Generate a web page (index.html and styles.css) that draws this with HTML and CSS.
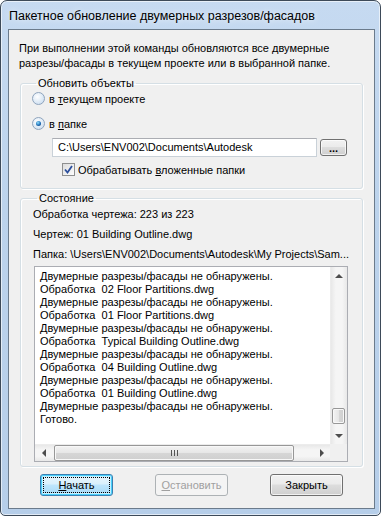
FILE: index.html
```html
<!DOCTYPE html>
<html lang="ru">
<head>
    <meta charset="UTF-8">
    <title>Пакетное обновление двумерных разрезов/фасадов</title>
    <link rel="stylesheet" href="styles.css">
</head>
<body>
    <div class="window">
        <div class="titlebar">Пакетное обновление двумерных разрезов/фасадов</div>
        <div class="client">
            <p class="intro">При выполнении этой команды обновляются все двумерные<br>разрезы/фасады в текущем проекте или в выбранной папке.</p>

            <fieldset class="group group-update">
                <legend>Обновить объекты</legend>
                <label class="option first"><span class="radio"></span><span>в <u>т</u>екущем проекте</span></label>
                <label class="option second"><span class="radio checked"></span><span>в <u>п</u>апке</span></label>
                <div class="path-row">
                    <div class="textbox">C:\Users\ENV002\Documents\Autodesk</div>
                    <button class="btn btn-browse">...</button>
                </div>
                <label class="check-row">
                    <span class="checkbox">
                        <svg width="9" height="9" viewBox="0 0 9 9"><path d="M1 4.5 L3.5 7.5 L8 1" fill="none" stroke="#2b4e9c" stroke-width="1.8"/></svg>
                    </span>
                    <span>Обрабатывать <u>в</u>ложенные папки</span>
                </label>
            </fieldset>

            <fieldset class="group group-state">
                <legend>Состояние</legend>
                <div class="status first">Обработка чертежа: 223 из 223</div>
                <div class="status">Чертеж: 01 Building Outline.dwg</div>
                <div class="status last">Папка: \Users\ENV002\Documents\Autodesk\My Projects\Sam...</div>
                <div class="listbox">
                    <div class="list-text">
                        <div>Двумерные разрезы/фасады не обнаружены.</div>
                        <div>Обработка&nbsp; 02 Floor Partitions.dwg</div>
                        <div>Двумерные разрезы/фасады не обнаружены.</div>
                        <div>Обработка&nbsp; 01 Floor Partitions.dwg</div>
                        <div>Двумерные разрезы/фасады не обнаружены.</div>
                        <div>Обработка&nbsp; Typical Building Outline.dwg</div>
                        <div>Двумерные разрезы/фасады не обнаружены.</div>
                        <div>Обработка&nbsp; 04 Building Outline.dwg</div>
                        <div>Двумерные разрезы/фасады не обнаружены.</div>
                        <div>Обработка&nbsp; 01 Building Outline.dwg</div>
                        <div>Двумерные разрезы/фасады не обнаружены.</div>
                        <div>Готово.</div>
                    </div>
                    <div class="vscroll">
                        <div class="sb-btn"><span class="arrow up"></span></div>
                        <div class="sb-track v">
                            <div class="thumb vthumb"></div>
                        </div>
                        <div class="sb-btn"><span class="arrow down"></span></div>
                    </div>
                    <div class="hscroll">
                        <div class="sb-btn"><span class="arrow left"></span></div>
                        <div class="sb-track h">
                            <div class="thumb hthumb"><span class="grip"></span></div>
                        </div>
                        <div class="sb-btn"><span class="arrow right"></span></div>
                    </div>
                    <div class="corner"></div>
                </div>
            </fieldset>

            <div class="actions">
                <button class="btn btn-default"><span class="focus"><span><u>Н</u>ачать</span></span></button>
                <button class="btn" disabled><u>О</u>становить</button>
                <button class="btn">Закрыть</button>
            </div>
        </div>
    </div>
</body>
</html>
```

FILE: styles.css
```css
body {
    margin: 0;
    background: #fff;
    font-family: "Liberation Sans", Arial, sans-serif;
    font-size: 11px;
    color: #000;
}
.window {
    width: 381px;
    height: 516px;
    box-sizing: border-box;
    border: 1px solid #3d4a59;
    border-radius: 7px 7px 5px 5px;
    background: linear-gradient(to bottom, #c6daf1 0%, #bcd3ec 40%, #b6cee9 100%);
    box-shadow: inset 0 0 0 1px rgba(255,255,255,0.6);
    padding: 0 5px 6px 7px;
    display: flex;
    flex-direction: column;
}
.titlebar {
    height: 28px;
    line-height: 30px;
    padding-left: 1px;
    font-size: 12.5px;
    color: #000;
    text-shadow: 0 0 6px rgba(255,255,255,0.9);
    white-space: nowrap;
}
.client {
    flex: 1;
    border: 1px solid #6b7b8c;
    background: #f0f0f0;
    padding: 11px 11px 0 11px;
    display: flex;
    flex-direction: column;
}
.intro {
    margin: 0 0 0 -1px;
    line-height: 15px;
    white-space: nowrap;
}
u {
    text-decoration: underline;
    text-underline-offset: 1px;
}

/* group boxes */
.group {
    margin: 5px 0 0 0;
    padding: 0 14px 11px 11px;
    border: 1px solid #d5dfe5;
    border-radius: 3px;
    box-shadow: 1px 1px 0 #fff, inset 1px 1px 0 #fff;
    min-width: 0;
}
.group legend {
    padding: 0 2px;
    margin-left: 4px;
    line-height: 15px;
}
.option {
    display: flex;
    align-items: center;
    height: 15px;
    gap: 4px;
}
.option.first {
    margin-top: 0;
}
.option.second {
    margin-top: 10px;
}
.radio {
    width: 11px;
    height: 11px;
    border-radius: 50%;
    border: 1px solid #8fa4bd;
    background: radial-gradient(circle at 40% 35%, #fff 0%, #dbe8f5 60%, #c2d6ec 100%);
    position: relative;
}
.radio.checked::after {
    content: "";
    position: absolute;
    left: 3px;
    top: 3px;
    width: 5px;
    height: 5px;
    border-radius: 50%;
    background: radial-gradient(circle at 40% 35%, #8fe0ff 0%, #1f6fb8 55%, #0d2b58 100%);
}
.path-row {
    display: flex;
    align-items: flex-start;
    margin: 7px 0 0 20px;
    gap: 3px;
}
.textbox {
    width: 258px;
    height: 17px;
    line-height: 17px;
    padding-left: 5px;
    background: #fff;
    border: 1px solid #c9d1d8;
    border-top-color: #abadb3;
    white-space: nowrap;
}
.check-row {
    display: flex;
    align-items: center;
    height: 15px;
    margin: 5px 0 0 30px;
    gap: 3px;
}
.checkbox {
    width: 11px;
    height: 11px;
    border: 1px solid #8e8f8f;
    background: linear-gradient(135deg, #dcdcdc, #fdfdfd);
    display: flex;
    align-items: center;
    justify-content: center;
}
.checkbox svg {
    display: block;
}

/* state group */
.group-state {
    margin-top: 2px;
    padding: 0 14px 4px 12px;
}
.status {
    height: 15px;
    line-height: 15px;
    white-space: nowrap;
}
.status.first {
    margin-top: 1px;
}
.status + .status {
    margin-top: 5px;
}
.listbox {
    margin: 4px 0 0 1px;
    width: 312px;
    height: 194px;
    border: 1px solid #abadb3;
    background: #fff;
    display: grid;
    grid-template-columns: 1fr 17px;
    grid-template-rows: 1fr 17px;
}
.list-text {
    padding: 3px 0 0 5px;
    line-height: 13px;
    white-space: nowrap;
    overflow: hidden;
}
.vscroll, .hscroll {
    display: flex;
    background: linear-gradient(to right, #e8e8e8, #f5f5f5 30%, #f5f5f5 70%, #e8e8e8);
}
.vscroll {
    flex-direction: column;
    border-left: 1px solid #ececec;
}
.hscroll {
    background: linear-gradient(to bottom, #e8e8e8, #f5f5f5 30%, #f5f5f5 70%, #e8e8e8);
    border-top: 1px solid #ececec;
}
.sb-btn {
    width: 17px;
    height: 17px;
    flex: none;
    display: flex;
    align-items: center;
    justify-content: center;
}
.vscroll .sb-btn {
    width: 16px;
}
.hscroll .sb-btn {
    height: 16px;
}
.sb-track {
    flex: 1;
    display: flex;
}
.sb-track.v {
    flex-direction: column;
    justify-content: flex-end;
    padding-bottom: 3px;
}
.thumb {
    box-sizing: border-box;
    border: 1px solid #979797;
    border-radius: 2px;
    box-shadow: inset 0 0 0 1px #f8f8f8;
}
.vthumb {
    height: 16px;
    margin: 0 2px 0 1px;
    background: linear-gradient(to right, #f3f3f3, #e6e6e6 50%, #d6d6d6 51%, #cfcfcf);
}
.hthumb {
    width: 240px;
    margin: 0 0 0 2px;
    background: linear-gradient(to bottom, #f3f3f3, #e6e6e6 50%, #d6d6d6 51%, #cfcfcf);
    display: flex;
    align-items: center;
    justify-content: center;
}
.grip {
    width: 5px;
    height: 6px;
    border-left: 1px solid #555;
    border-right: 1px solid #555;
    position: relative;
}
.grip::after {
    content: "";
    position: absolute;
    left: 2px;
    top: 0;
    width: 1px;
    height: 6px;
    background: #555;
}
.arrow {
    width: 0;
    height: 0;
    border: 3px solid transparent;
}
.arrow.up {
    border-bottom: 4px solid #4d4d4d;
    border-top: 0;
    border-left-width: 4px;
    border-right-width: 4px;
}
.arrow.down {
    border-top: 4px solid #4d4d4d;
    border-bottom: 0;
    border-left-width: 4px;
    border-right-width: 4px;
}
.arrow.left {
    border-right: 4px solid #4d4d4d;
    border-left: 0;
    border-top-width: 4px;
    border-bottom-width: 4px;
}
.arrow.right {
    border-left: 4px solid #4d4d4d;
    border-right: 0;
    border-top-width: 4px;
    border-bottom-width: 4px;
}
.corner {
    background: #f0f0f0;
}

/* buttons */
.btn {
    font-family: inherit;
    font-size: 11px;
    color: #000;
    height: 22px;
    padding: 0;
    border: 1px solid #707070;
    border-radius: 3px;
    background: linear-gradient(to bottom, #f2f2f2 0%, #ebebeb 45%, #dddddd 50%, #cfcfcf 100%);
    box-shadow: inset 0 0 0 1px rgba(255,255,255,0.7);
}
.btn-browse {
    width: 27px;
    height: 17px;
    margin-top: 1px;
    line-height: 8px;
    font-size: 11px;
    font-weight: bold;
}
.actions {
    display: flex;
    gap: 42px;
    margin: 7px 0 0 20px;
}
.actions .btn {
    width: 73px;
}
.btn-default {
    border-color: #3c7fb1;
    box-shadow: inset 0 0 0 1px #48d0fb, inset 0 0 0 2px #c5efff;
    background: linear-gradient(to bottom, #eaf6fd 0%, #d9f0fc 45%, #bee6fd 50%, #a7d9f5 100%);
    display: flex;
    padding: 2px;
}
.btn-default .focus {
    flex: 1;
    border: 1px dotted #000;
    display: flex;
    align-items: center;
    justify-content: center;
}
.btn:disabled {
    color: #a0a0a0;
    border-color: #adb2b5;
    background: #f4f4f4;
    box-shadow: none;
}
```
